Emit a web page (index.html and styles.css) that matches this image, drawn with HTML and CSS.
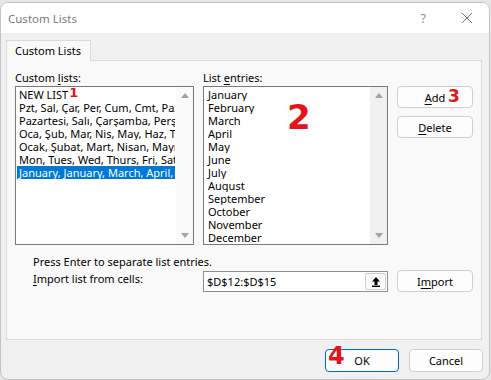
FILE: index.html
```html
<!DOCTYPE html>
<html lang="en">
<head>
    <meta charset="UTF-8">
    <title>Custom Lists</title>
    <link rel="stylesheet" href="styles.css">
</head>
<body>
    <div class="window">
        <div class="titlebar">
            <span class="title">Custom Lists</span>
            <span class="help">?</span>
            <svg class="close" width="12" height="12" viewBox="0 0 12 12"><path d="M1 1L11 11M11 1L1 11" stroke="#777" stroke-width="1"/></svg>
        </div>
        <div class="body">
            <div class="tab">Custom Lists</div>
            <div class="panel">
                <div class="grid">
                    <div class="label">Custom <u>l</u>ists:</div>
                    <div class="label">List <u>e</u>ntries:</div>
                    <div></div>

                    <div class="listbox">
                        <div class="items">
                            <div class="item">NEW LIST<span class="mark m1">1</span></div>
                            <div class="item">Pzt, Sal, Çar, Per, Cum, Cmt, Paz</div>
                            <div class="item">Pazartesi, Salı, Çarşamba, Perşembe</div>
                            <div class="item">Oca, Şub, Mar, Nis, May, Haz, Tem</div>
                            <div class="item">Ocak, Şubat, Mart, Nisan, Mayıs</div>
                            <div class="item">Mon, Tues, Wed, Thurs, Fri, Sat</div>
                            <div class="item selected">January, January, March, April, May</div>
                        </div>
                        <div class="scroll light">
                            <span class="arrow up"></span>
                            <span class="arrow down"></span>
                        </div>
                    </div>
                    <div class="listbox">
                        <div class="items entries">
                            <div class="item">January</div>
                            <div class="item">February</div>
                            <div class="item">March</div>
                            <div class="item">April</div>
                            <div class="item">May</div>
                            <div class="item">June</div>
                            <div class="item">July</div>
                            <div class="item">August</div>
                            <div class="item">September</div>
                            <div class="item">October</div>
                            <div class="item">November</div>
                            <div class="item">December</div>
                            <span class="mark m2">2</span>
                        </div>
                        <div class="scroll">
                            <span class="arrow up"></span>
                            <span class="arrow down"></span>
                        </div>
                    </div>
                    <div class="side">
                        <button class="btn add"><u>A</u>dd<span class="mark m3">3</span></button>
                        <button class="btn"><u>D</u>elete</button>
                    </div>

                    <div class="note">Press Enter to separate list entries.</div>

                    <div class="import-label"><u>I</u>mport list from cells:</div>
                    <div class="refbox">
                        <span class="ref">$D$12:$D$15</span>
                        <span class="collapse">
                            <svg width="10" height="11" viewBox="0 0 10 11"><path d="M5 1L1 5.5H3.5V9H6.5V5.5H9Z" fill="#000"/><rect x="1" y="9.6" width="8" height="1.4" fill="#000"/></svg>
                        </span>
                    </div>
                    <button class="btn">I<u>m</u>port</button>
                </div>
            </div>
            <div class="footer">
                <button class="btn default"><span class="mark m4">4</span>OK</button>
                <button class="btn">Cancel</button>
            </div>
        </div>
    </div>
</body>
</html>
```

FILE: styles.css
```css
body {
    margin: 0;
    background: #e6e6e6;
    font-family: "Noto Sans", "Liberation Sans", sans-serif;
    font-size: 11px;
    color: #000;
}
.window {
    margin-top: 2px;
    width: 488px;
    height: 376px;
    border: 1px solid #c4c4c4;
    border-radius: 8px;
    overflow: hidden;
    background: #f0f0f0;
    display: flex;
    flex-direction: column;
}
.titlebar {
    height: 30px;
    background: #fff;
    display: flex;
    align-items: center;
    padding-left: 7px;
}
.title {
    flex: 1;
    color: #7a7a7a;
    font-size: 11.5px;
}
.help {
    color: #8a8a8a;
    font-size: 12px;
    margin-right: 35px;
}
.close {
    margin-right: 16px;
}
.body {
    flex: 1;
    padding: 7px 5px 0 5px;
}
.tab {
    display: inline-block;
    width: 75px;
    height: 20px;
    line-height: 20px;
    padding-left: 8px;
    background: #f9f9f9;
    border: 1px solid #dadada;
    border-bottom: none;
    position: relative;
    z-index: 1;
}
.panel {
    width: 474px;
    height: 278px;
    margin-top: -1px;
    background: #f9f9f9;
    border: 1px solid #dadada;
}
.grid {
    display: grid;
    grid-template-columns: 179px 185px 76px;
    column-gap: 9px;
    padding: 9px 0 0 8px;
}
.label {
    height: 16px;
    line-height: 16px;
}
u {
    text-decoration-thickness: 1px;
    text-underline-offset: 2px;
}
.listbox {
    height: 157px;
    border: 1px solid #7a7a7a;
    background: #fff;
    display: flex;
    overflow: hidden;
}
.items {
    flex: 1;
    padding: 1px 1px 0 1px;
    overflow: hidden;
    position: relative;
}
.item {
    height: 13px;
    line-height: 13px;
    padding-left: 2px;
    white-space: nowrap;
    overflow: hidden;
}
.entries .item {
    padding-left: 3px;
}
.selected {
    background: #0078d7;
    color: #fff;
}
.scroll {
    width: 17px;
    background: #f0f0f0;
    display: flex;
    flex-direction: column;
    justify-content: space-between;
    align-items: center;
    padding: 6px 0;
}
.scroll.light {
    background: #fafafa;
}
.arrow {
    width: 0;
    height: 0;
    border-left: 4px solid transparent;
    border-right: 4px solid transparent;
}
.arrow.up {
    border-bottom: 5px solid #a3a3a3;
}
.arrow.down {
    border-top: 5px solid #a3a3a3;
}
.side {
    display: flex;
    flex-direction: column;
    gap: 8px;
}
.btn {
    font-family: inherit;
    font-size: 11px;
    height: 22px;
    background: #fdfdfd;
    border: 1px solid #cfcfcf;
    border-radius: 4px;
    padding: 0;
    color: #000;
    position: relative;
}
.note {
    grid-column: 1 / -1;
    padding-left: 18px;
    margin-top: 9px;
    line-height: 16px;
}
.import-label {
    padding-left: 18px;
    line-height: 16px;
    margin-top: 1px;
}
.refbox {
    height: 19px;
    margin-top: 1px;
    border: 1px solid #8e8e8e;
    background: #fff;
    display: flex;
    align-items: center;
}
.ref {
    flex: 1;
    padding-left: 3px;
}
.collapse {
    width: 19px;
    height: 15px;
    margin-right: 1px;
    border: 1px solid #cfcfcf;
    border-radius: 2px;
    background: #fafafa;
    display: flex;
    align-items: center;
    justify-content: center;
}
.grid > .btn {
    height: 22px;
}
.footer {
    display: flex;
    justify-content: flex-end;
    gap: 10px;
    padding: 9px 1px 0 0;
}
.footer .btn {
    width: 74px;
    height: 23px;
}
.footer .default {
    border: 1px solid #0067c0;
}
.mark {
    position: absolute;
    color: #e3151b;
    font-family: "DejaVu Sans", sans-serif;
    font-weight: bold;
}
.m1 {
    font-size: 13px;
    position: relative;
    left: 1px;
    top: -2px;
}
.m2 {
    font-size: 34px;
    left: 83px;
    top: 10px;
}
.m3 {
    font-size: 17px;
    left: 50px;
    top: -1px;
}
.m4 {
    font-size: 24px;
    left: 2px;
    top: -8px;
}
```
